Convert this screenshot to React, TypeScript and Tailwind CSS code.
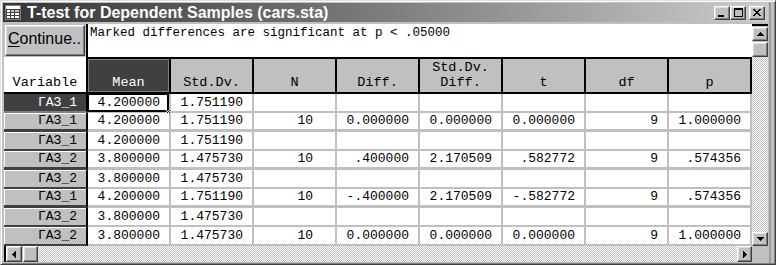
import React from 'react'

type Row = {
  v: string
  mean: string
  sd: string
  n?: string
  diff?: string
  sdd?: string
  t?: string
  df?: string
  p?: string
  pairEnd?: boolean
}

const rows: Row[] = [
  { v: 'ГАЗ_1', mean: '4.200000', sd: '1.751190' },
  { v: 'ГАЗ_1', mean: '4.200000', sd: '1.751190', n: '10', diff: '0.000000', sdd: '0.000000', t: '0.000000', df: '9', p: '1.000000', pairEnd: true },
  { v: 'ГАЗ_1', mean: '4.200000', sd: '1.751190' },
  { v: 'ГАЗ_2', mean: '3.800000', sd: '1.475730', n: '10', diff: '.400000', sdd: '2.170509', t: '.582772', df: '9', p: '.574356', pairEnd: true },
  { v: 'ГАЗ_2', mean: '3.800000', sd: '1.475730' },
  { v: 'ГАЗ_1', mean: '4.200000', sd: '1.751190', n: '10', diff: '-.400000', sdd: '2.170509', t: '-.582772', df: '9', p: '.574356', pairEnd: true },
  { v: 'ГАЗ_2', mean: '3.800000', sd: '1.475730' },
  { v: 'ГАЗ_2', mean: '3.800000', sd: '1.475730', n: '10', diff: '0.000000', sdd: '0.000000', t: '0.000000', df: '9', p: '1.000000' },
]

const headers: { key: keyof Row; label: string[] }[] = [
  { key: 'mean', label: ['Mean'] },
  { key: 'sd', label: ['Std.Dv.'] },
  { key: 'n', label: ['N'] },
  { key: 'diff', label: ['Diff.'] },
  { key: 'sdd', label: ['Std.Dv.', 'Diff.'] },
  { key: 't', label: ['t'] },
  { key: 'df', label: ['df'] },
  { key: 'p', label: ['p'] },
]

const raised =
  'border border-t-[#ffffff] border-l-[#ffffff] border-r-[#404040] border-b-[#404040] bg-[#c0c0c0] shadow-[inset_-1px_-1px_0_#808080,inset_1px_1px_0_#dfdfdf]'

function Arrow({ dir }: { dir: 'up' | 'down' | 'left' | 'right' }) {
  const pts = {
    up: '0,4 3.5,0 7,4',
    down: '0,0 7,0 3.5,4',
    left: '4,0 4,7 0,3.5',
    right: '0,0 0,7 4,3.5',
  }[dir]
  const vertical = dir === 'up' || dir === 'down'
  return (
    <svg width={vertical ? 7 : 4} height={vertical ? 4 : 7} shapeRendering="crispEdges">
      <polygon points={pts} fill="#000" />
    </svg>
  )
}

function AppIcon() {
  return (
    <svg width="16" height="15" viewBox="0 0 16 15" shapeRendering="crispEdges">
      <rect x="0" y="0" width="16" height="15" fill="#808080" />
      <rect x="1" y="1" width="14" height="3" fill="#ffffff" />
      <rect x="1" y="4" width="14" height="10" fill="#404040" />
      <rect x="2" y="5" width="3" height="2" fill="#ffffff" />
      <rect x="6" y="5" width="3" height="2" fill="#c0c0c0" />
      <rect x="10" y="5" width="4" height="2" fill="#c0c0c0" />
      <rect x="2" y="8" width="3" height="2" fill="#ffffff" />
      <rect x="6" y="8" width="3" height="2" fill="#ffffff" />
      <rect x="10" y="8" width="4" height="2" fill="#ffffff" />
      <rect x="2" y="11" width="3" height="2" fill="#ffffff" />
      <rect x="6" y="11" width="3" height="2" fill="#ffffff" />
      <rect x="10" y="11" width="4" height="2" fill="#ffffff" />
    </svg>
  )
}

function TitleBar() {
  return (
    <div className="flex h-[19px] items-center bg-linear-to-r from-[#363636] to-[#cdcdcd] pl-[2px] pr-[3px]">
      <AppIcon />
      <span className="ml-[6px] whitespace-nowrap font-['Liberation_Sans',Arial,sans-serif] text-[16px] font-bold leading-[19px] text-white">
        T-test for Dependent Samples (cars.sta)
      </span>
      <div className="ml-auto flex items-center">
        <div className={`flex h-[14px] w-[16px] items-end justify-start pb-[2px] pl-[3px] ${raised}`}>
          <div className="h-[2px] w-[6px] bg-black" />
        </div>
        <div className={`flex h-[14px] w-[16px] items-center justify-center ${raised}`}>
          <div className="h-[9px] w-[9px] border border-t-2 border-black" />
        </div>
        <div className={`ml-[3px] flex h-[14px] w-[16px] items-center justify-center ${raised}`}>
          <svg width="8" height="7" viewBox="0 0 8 7" shapeRendering="crispEdges">
            <path d="M0 0h2v1h1v1h2V1h1V0h2v1H7v1H6v1H5v1h1v1h1v1h1v1H6V6H5V5H3v1H2v1H0V6h1V5h1V4h1V3H2V2H1V1H0z" fill="#000" />
          </svg>
        </div>
      </div>
    </div>
  )
}

function VScroll() {
  return (
    <div className="flex w-[16px] flex-col border-t-2 border-black">
      <div className={`mt-[1px] flex h-[14px] items-center justify-center ${raised}`}>
        <Arrow dir="up" />
      </div>
      <div className={`mt-[1px] h-[15px] ${raised}`} />
      <div className="flex-1 bg-[image:repeating-conic-gradient(#c0c0c0_0_25%,#ffffff_0_50%)] bg-[length:2px_2px]" />
      <div className={`flex h-[14px] items-center justify-center ${raised}`}>
        <Arrow dir="down" />
      </div>
    </div>
  )
}

function HScroll() {
  return (
    <div className="flex h-[16px]">
      <div className="flex flex-1 border-l-2 border-black">
        <div className={`flex w-[16px] items-center justify-center ${raised}`}>
          <Arrow dir="left" />
        </div>
        <div className={`ml-[1px] w-[15px] ${raised}`} />
        <div className="flex-1 bg-[image:repeating-conic-gradient(#c0c0c0_0_25%,#ffffff_0_50%)] bg-[length:2px_2px]" />
        <div className={`flex w-[15px] items-center justify-center ${raised}`}>
          <Arrow dir="right" />
        </div>
      </div>
      <div className="w-[16px] bg-[#c0c0c0]" />
    </div>
  )
}

function Grid() {
  return (
    <div className="flex min-w-0 flex-1 flex-col overflow-hidden">
      <div className="flex h-[33px]">
        <div className="w-[82px] bg-[#c0c0c0] pl-[1px] pt-[1px]">
          <div className={`flex h-[31px] w-[80px] items-center pb-[3px] pl-[2px] font-['Liberation_Sans',Arial,sans-serif] text-[16px] leading-[18px] ${raised}`}>
            <span className="whitespace-nowrap">
              <span className="underline underline-offset-2">C</span>ontinue..
            </span>
          </div>
        </div>
        <div className="flex-1 whitespace-nowrap border-l-2 border-black bg-white pl-[2px] pt-[2px] text-[12.5px] leading-[14px]">
          Marked differences are significant at p &lt; .05000
        </div>
      </div>
      <div className="flex h-[37px]">
        <div className="flex w-[84px] items-end justify-center border-r-2 border-b-2 border-black bg-white pb-[2px] text-[13.5px] leading-[15px]">
          Variable
        </div>
        {headers.map((h, i) => (
          <div
            key={h.key}
            className={`flex w-[83px] flex-col items-center justify-end border-t-2 border-r-2 border-b-2 border-black pb-[2px] text-[13.5px] leading-[15px] ${
              i === 0 ? 'bg-[#404040] text-white shadow-[inset_0_0_0_1px_#808080]' : 'bg-[#c0c0c0] text-black'
            }`}
          >
            {h.label.map((l) => (
              <span key={l}>{l}</span>
            ))}
          </div>
        ))}
      </div>
      {rows.map((r, ri) => {
        const sep = r.pairEnd ? 'border-b-[3px]' : 'border-b-2'
        return (
          <div key={ri} className="flex h-[19px] shrink-0">
            <div
              className={`flex w-[84px] items-center justify-end border-r-2 border-r-black pr-[9px] text-[13px] ${sep} ${
                ri === 0
                  ? 'border-b-[#808080] bg-[#404040] text-white'
                  : 'border-b-[#404040] bg-[#c0c0c0] text-black shadow-[inset_1px_1px_0_#ffffff]'
              }`}
            >
              {r.v}
            </div>
            {headers.map((h) => (
              <div
                key={h.key}
                className={`relative flex w-[83px] items-center justify-end border-r-2 border-[#c0c0c0] bg-white text-[13px] ${sep} ${
                  h.key === 'n' ? 'pr-[22px]' : 'pr-[9px]'
                }`}
              >
                {r[h.key] as string}
                {ri === 0 && h.key === 'mean' ? (
                  <>
                    <div className="absolute -top-[1px] -left-[1px] right-0 bottom-[-1px] border-2 border-black" />
                    <div className="absolute -right-[1px] -bottom-[3px] h-[4px] w-[4px] bg-[image:repeating-conic-gradient(#000000_0_25%,#ffffff_0_50%)] bg-[length:2px_2px]" />
                  </>
                ) : null}
              </div>
            ))}
          </div>
        )
      })}
    </div>
  )
}

export default function App() {
  return (
    <div className="flex h-[265px] w-[776px] flex-col overflow-hidden border border-t-[#dfdfdf] border-l-[#dfdfdf] border-r-[#404040] border-b-[#404040] bg-[#c0c0c0] pt-[2px] pr-[7px] pb-[2px] pl-[2px] font-['Liberation_Mono','Courier_New',monospace] text-black shadow-[inset_1px_1px_0_#ffffff,inset_-1px_-1px_0_#808080,inset_-4px_0_0_#c0c0c0,inset_-6px_0_0_#9a9a9a]">
      <TitleBar />
      <div className="mt-[2px] ml-[1px] flex min-h-0 flex-1 flex-col">
        <div className="flex min-h-0 flex-1">
          <Grid />
          <VScroll />
        </div>
        <HScroll />
      </div>
    </div>
  )
}
